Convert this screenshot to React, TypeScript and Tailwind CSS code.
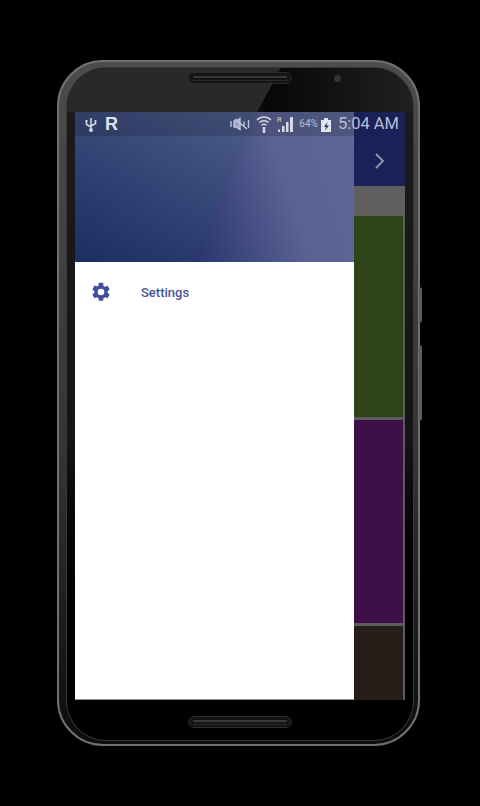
import React from "react";

function Speaker() {
  return (
    <div className="relative w-[104px] h-[12px] rounded-full bg-[#141414] border border-[#2c2c2c] flex flex-col justify-center gap-[2px] px-[4px]">
      <div className="w-full h-[2px] rounded-full bg-[#383838]" />
      <div className="w-full h-[1px] rounded-full bg-[#2a2a2a]" />
    </div>
  );
}

function StatusBar() {
  return (
    <div className="absolute left-0 top-0 w-[330px] h-[24px] flex items-center text-[#b9bdd2] bg-[linear-gradient(to_right,rgba(0,0,0,.16)_279px,transparent_279px)] pl-[10px] pr-[6px]">
      <svg width="12" height="15" viewBox="0 0 12 15" fill="none" stroke="#d5d8e6" strokeWidth="1.5">
        <path d="M6 1v13M1.5 4.5v3L6 10M10.5 4v2.5L6 9" />
        <circle cx="6" cy="13" r="1.2" fill="#d5d8e6" />
        <rect x="0.5" y="3" width="2" height="2" fill="#d5d8e6" stroke="none" />
        <circle cx="10.5" cy="4" r="1.1" fill="#d5d8e6" stroke="none" />
      </svg>
      <span className="relative ml-[7px] w-[14px] text-right text-[18px] leading-none font-bold text-[#dfe2ec] font-['Liberation_Sans',sans-serif]">R</span>
      <div className="ml-auto flex items-center">
        <svg width="21" height="14" viewBox="0 0 21 14" fill="none" stroke="#c3c7da" strokeWidth="1.4">
          <path d="M1 4v6M4 4h2l4-2.5v11L6 10H4z" fill="#9da3c0" />
          <path d="M5 2l12 10" strokeWidth="1.6" />
          <path d="M14 4.5v5M18.5 3v8" />
        </svg>
        <svg className="ml-[5px]" width="16" height="18" viewBox="0 0 16 18" fill="none" stroke="#d5d8e6" strokeWidth="1.4">
          <path d="M1 5c4-4 10-4 14 0M3.3 7.6c2.6-2.4 6.8-2.4 9.4 0M5.6 10.2c1.3-1.1 3.5-1.1 4.8 0" />
          <path d="M8 12v6" strokeWidth="2.4" />
        </svg>
        <svg className="ml-[5px]" width="17" height="18" viewBox="0 0 17 18">
          <rect x="1" y="14.5" width="2" height="2.5" fill="#d5d8e6" />
          <rect x="5" y="11" width="2.5" height="6" fill="#d5d8e6" />
          <rect x="9" y="7" width="2.5" height="10" fill="#d5d8e6" />
          <rect x="13" y="2" width="3" height="15" fill="#d5d8e6" />
          <text x="0" y="7" fontSize="7.5" fill="#d5d8e6" fontFamily="Roboto, sans-serif">R</text>
        </svg>
        <span className="ml-[5px] text-[10px] leading-none font-['Roboto',sans-serif]">64%</span>
        <svg className="ml-[3px]" width="10" height="15" viewBox="0 0 10 15">
          <rect x="0" y="3" width="10" height="12" fill="#e2e4ee" />
          <rect x="3" y="1" width="4" height="2" fill="#e2e4ee" />
          <path d="M6.5 5L3 10h2.2L4 13.5 8 8.5H5.5z" fill="#26305f" />
        </svg>
        <span className="ml-[7px] text-[16.5px] leading-none font-['Roboto',sans-serif]">5:04 AM</span>
      </div>
    </div>
  );
}

export default function App() {
  return (
    <div className="w-[480px] h-[806px] bg-black pt-[60px] pl-[57px] overflow-hidden">
      <div className="relative w-[363px] h-[686px] rounded-[46px] border-2 border-[#707070] bg-gradient-to-b from-[#4c4c4c] via-[#333333] via-[60%] to-[#0c0c0c] pl-[7px] pr-[4px] pt-[5px] pb-[3px]">
        <div className="absolute -right-[4px] top-[225px] w-[3px] h-[36px] bg-[#5c5c5c] rounded-r-sm" />
        <div className="absolute -right-[4px] top-[283px] w-[3px] h-[76px] bg-[#5c5c5c] rounded-r-sm" />
        <div className="w-full h-full overflow-hidden rounded-[40px] border border-[#383838] bg-gradient-to-b from-[#1c1c1c] via-[#151515] via-[55%] to-black to-[90%] flex flex-col px-[8px]">
          <div className="relative h-[44px] -mx-[8px] flex justify-center pt-[4px] bg-[linear-gradient(to_right,#1c1c1c_0%,#1a1a1a_50%,#070707_58%,#202020_100%)]">
            <div className="absolute inset-0 bg-[#292929] [clip-path:polygon(0_0,214px_0,190px_44px,0_44px)]" />
            <Speaker />
            <div className="absolute right-[72px] top-[7px] w-[7px] h-[7px] rounded-full bg-[#333333]" />
          </div>
          <div className="relative flex h-[588px] w-[330px] font-['Roboto',sans-serif]">
            <div className="w-[279px] flex flex-col border-b border-[#999]">
              <div className="relative h-[150px] bg-[linear-gradient(72deg,#1f2c68_30%,#5a6293_72%,#5f6796_100%)]">
                <div className="absolute inset-0 bg-gradient-to-tr from-[#1a2e60] to-[#5a6896] [clip-path:polygon(0_0,182px_0,117px_150px,0_150px)]" />
              </div>
              <div className="flex-1 bg-white">
                <div className="flex items-center h-[60px] pl-[15px]">
                  <svg width="22" height="22" viewBox="0 0 24 24" fill="#424e9c">
                    <path d="M19.14 12.94c.04-.3.06-.61.06-.94s-.02-.64-.07-.94l2.03-1.58a.49.49 0 0 0 .12-.61l-1.92-3.32a.49.49 0 0 0-.59-.22l-2.39.96a7 7 0 0 0-1.62-.94l-.36-2.54A.48.48 0 0 0 13.92 2h-3.84a.47.47 0 0 0-.47.41l-.36 2.54c-.59.24-1.13.57-1.62.94l-2.39-.96a.48.48 0 0 0-.59.22L2.74 8.87a.47.47 0 0 0 .12.61l2.03 1.58c-.05.3-.09.63-.09.94s.02.64.07.94l-2.03 1.58a.49.49 0 0 0-.12.61l1.92 3.32c.12.22.37.29.59.22l2.39-.96c.5.38 1.03.7 1.62.94l.36 2.54c.05.24.24.41.48.41h3.84c.24 0 .44-.17.47-.41l.36-2.54c.59-.24 1.13-.56 1.62-.94l2.39.96c.22.08.47 0 .59-.22l1.92-3.32a.46.46 0 0 0-.12-.61l-2.01-1.58zM12 15.6A3.6 3.6 0 1 1 12 8.4a3.6 3.6 0 0 1 0 7.2z" />
                  </svg>
                  <span className="ml-[29px] pt-[2px] text-[13px] font-medium text-[#4a5599]">Settings</span>
                </div>
              </div>
            </div>
            <div className="flex-1 flex flex-col">
              <div className="h-[74px] bg-[#1a2058] flex items-center justify-center pt-[24px] pl-[1px]">
                <svg width="14" height="18" viewBox="0 0 14 18" fill="none" stroke="#8d91ac" strokeWidth="2">
                  <path d="M3 2l7 7-7 7" />
                </svg>
              </div>
              <div className="h-[30px] bg-[#5f5f5f]" />
              <div className="flex-1 flex flex-col gap-[3px] pr-[2px] bg-[#5c5c5c]">
                <div className="h-[201px] bg-[#2f4318]" />
                <div className="h-[203px] bg-[#3f1047]" />
                <div className="flex-1 bg-[#281e19]" />
              </div>
            </div>
            <StatusBar />
          </div>
          <div className="flex-1 flex items-center justify-center pt-[4px]">
            <Speaker />
          </div>
        </div>
      </div>
    </div>
  );
}
